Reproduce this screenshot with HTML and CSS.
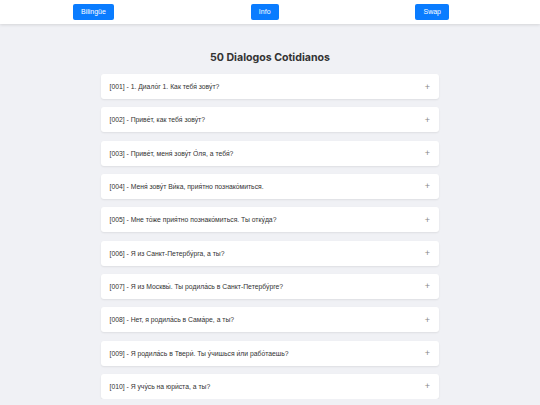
FILE: index.html
```html
<!DOCTYPE html>
<html lang="es">
<head>
<meta charset="utf-8">
<title>50 Dialogos Cotidianos</title>
<link rel="stylesheet" href="styles.css">
</head>
<body>
<header class="topbar">
  <button class="btn">Bilingüe</button>
  <button class="btn">Info</button>
  <button class="btn">Swap</button>
</header>
<main class="content">
  <h1 class="title">50 Dialogos Cotidianos</h1>
  <ul class="list">
    <li class="item"><span>[001] - 1. Диало́г 1. Как тебя́ зову́т?</span><span class="plus">+</span></li>
    <li class="item"><span>[002] - Приве́т, как тебя́ зову́т?</span><span class="plus">+</span></li>
    <li class="item"><span>[003] - Приве́т, меня́ зову́т О́ля, а тебя́?</span><span class="plus">+</span></li>
    <li class="item"><span>[004] - Меня́ зову́т Ви́ка, прия́тно познако́миться.</span><span class="plus">+</span></li>
    <li class="item"><span>[005] - Мне то́же прия́тно познако́миться. Ты отку́да?</span><span class="plus">+</span></li>
    <li class="item"><span>[006] - Я из Санкт-Петербу́рга, а ты?</span><span class="plus">+</span></li>
    <li class="item"><span>[007] - Я из Москвы́. Ты родила́сь в Санкт-Петербу́рге?</span><span class="plus">+</span></li>
    <li class="item"><span>[008] - Нет, я родила́сь в Сама́ре, а ты?</span><span class="plus">+</span></li>
    <li class="item"><span>[009] - Я родила́сь в Твери́. Ты у́чишься и́ли рабо́таешь?</span><span class="plus">+</span></li>
    <li class="item"><span>[010] - Я учу́сь на юри́ста, а ты?</span><span class="plus">+</span></li>
  </ul>
</main>
</body>
</html>
```
FILE: styles.css
```css
* { box-sizing: border-box; }
html, body { margin: 0; padding: 0; }
body {
  background: #f0f1f5;
  font-family: "Liberation Sans", Arial, sans-serif;
  color: #333;
  overflow: hidden;
}
.topbar {
  height: 24px;
  background: #fff;
  display: flex;
  align-items: center;
  justify-content: space-between;
  padding: 0 91px 0 73px;
  box-shadow: 0 1px 3px rgba(0,0,0,0.12);
}
.btn {
  height: 16px;
  padding: 0 8px;
  border: none;
  border-radius: 2px;
  background: #0a7cff;
  color: #fff;
  font-family: "Liberation Sans", Arial, sans-serif;
  font-size: 7px;
  line-height: 16px;
}
.content {
  width: 338px;
  margin: 0 auto;
  padding-top: 25px;
}
.title {
  margin: 0 0 8px;
  text-align: center;
  font-family: "Inter", "Open Sans", sans-serif;
  font-weight: 700;
  font-size: 10.6px;
  line-height: 17px;
  color: #333;
}
.list {
  list-style: none;
  margin: 0;
  padding: 0;
  display: flex;
  flex-direction: column;
  gap: 8.33px;
}
.item {
  height: 25px;
  background: #fff;
  border-radius: 3px;
  box-shadow: 0 1px 2px rgba(0,0,0,0.08);
  display: flex;
  align-items: center;
  justify-content: space-between;
  padding: 0 9px 0 8.5px;
  font-size: 6.8px;
  color: #333;
}
.plus {
  color: #888;
  font-size: 9px;
}
```
